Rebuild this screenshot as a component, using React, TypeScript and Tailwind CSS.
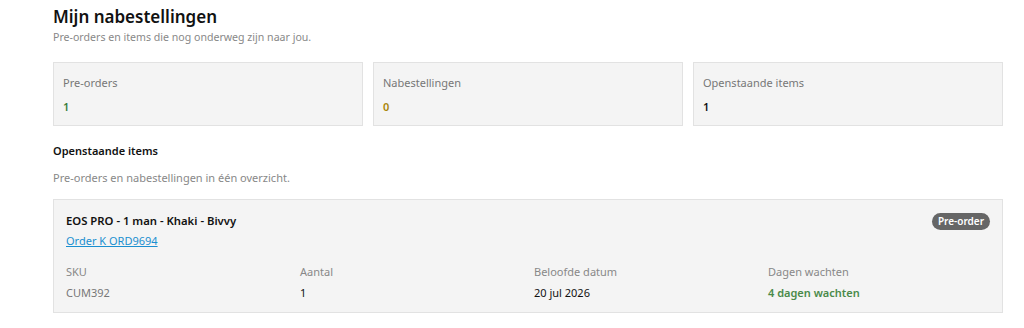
const stats = [
  { label: 'Pre-orders', value: '1', cls: 'text-[#3b7d3b]' },
  { label: 'Nabestellingen', value: '0', cls: 'text-[#a88408]' },
  { label: 'Openstaande items', value: '1', cls: 'text-[#111]' },
];

const fields = [
  { label: 'SKU', value: 'CUM392', cls: 'text-[#777]' },
  { label: 'Aantal', value: '1', cls: 'text-[#111]' },
  { label: 'Beloofde datum', value: '20 jul 2026', cls: 'text-[#111]' },
  { label: 'Dagen wachten', value: '4 dagen wachten', cls: 'font-semibold text-[#4a8a4a]' },
];

export default function App() {
  return (
    <div className="min-h-[328px] bg-white pl-[53px] pr-[21px] pt-[5px] text-[11px] text-[#111] [font-family:'Noto_Sans',sans-serif]">
      {/* Header */}
      <h1 className="text-[17px] font-semibold leading-[24px]">Mijn nabestellingen</h1>
      <p className="text-[10.6px] leading-[16px] text-[#888]">Pre-orders en items die nog onderweg zijn naar jou.</p>

      {/* Stat cards */}
      <div className="mt-[17px] grid grid-cols-3 gap-[10px]">
        {stats.map((s) => (
          <div key={s.label} className="h-[64px] border border-[#e2e2e2] bg-[#f4f4f4] px-[9px] pt-[11px]">
            <div className="leading-[18px] text-[#777]">{s.label}</div>
            <div className={`mt-[7px] font-semibold leading-[16px] ${s.cls}`}>{s.value}</div>
          </div>
        ))}
      </div>

      {/* Open items */}
      <h2 className="mt-[16px] font-semibold leading-[18px]">Openstaande items</h2>
      <p className="mt-[9px] leading-[18px] text-[#888]">Pre-orders en nabestellingen in één overzicht.</p>

      <div className="mt-[12px] h-[114px] border border-[#e2e2e2] bg-[#f4f4f4] px-[12px] pt-[11px]">
        <div className="flex items-start justify-between">
          <div>
            <div className="text-[11.3px] font-semibold leading-[20px]">EOS PRO - 1 man - Khaki - Bivvy</div>
            <a href="#" className="leading-[20px] text-[#1a8fd0] underline">Order K ORD9694</a>
          </div>
          <span className="mt-[2px] rounded-full bg-[#666] px-[6px] text-[10px] font-semibold leading-[17px] text-white">Pre-order</span>
        </div>
        <div className="mt-[11px] grid grid-cols-4 gap-[12px]">
          {fields.map((f) => (
            <div key={f.label}>
              <div className="leading-[20px] text-[#888]">{f.label}</div>
              <div className={`leading-[22px] ${f.cls}`}>{f.value}</div>
            </div>
          ))}
        </div>
      </div>
    </div>
  );
}
